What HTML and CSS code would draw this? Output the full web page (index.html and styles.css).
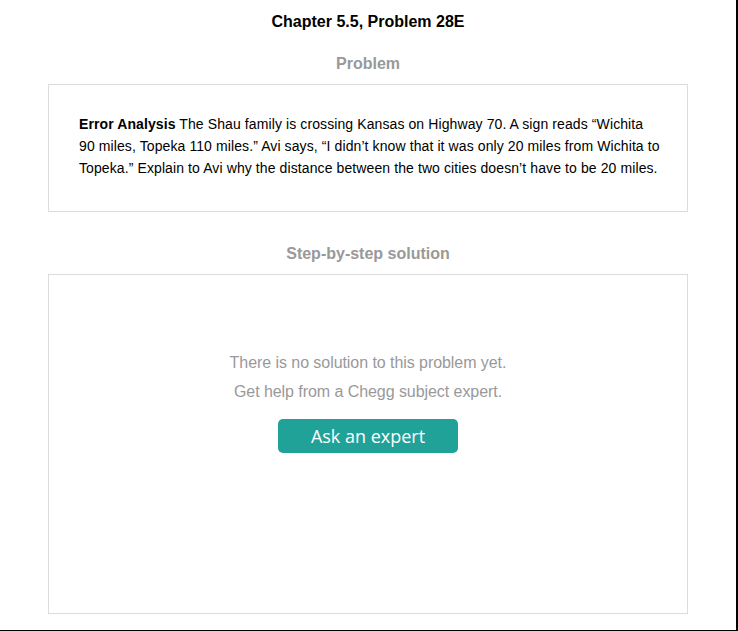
FILE: index.html
```html
<!DOCTYPE html>
<html>
<head>
<meta charset="utf-8">
<link rel="stylesheet" href="styles.css">
</head>
<body>
<div class="page">
  <h1 class="title">Chapter 5.5, Problem 28E</h1>
  <h2 class="section-head">Problem</h2>
  <div class="problem-box">
    <p class="problem-text"><b>Error Analysis</b> The Shau family is crossing Kansas on Highway 70. A sign reads “Wichita 90 miles, Topeka 110 miles.” Avi says, “I didn’t know that it was only 20 miles from Wichita to Topeka.” Explain to Avi why the distance between the two cities doesn’t have to be 20 miles.</p>
  </div>
  <h2 class="section-head section-head-2">Step-by-step solution</h2>
  <div class="solution-box">
    <p class="no-solution">There is no solution to this problem yet.<br>Get help from a Chegg subject expert.</p>
    <button class="ask-btn">Ask an expert</button>
  </div>
</div>
</body>
</html>
```
FILE: styles.css
```css
html, body {
  margin: 0;
  padding: 0;
  background: #fff;
}
.page {
  width: 738px;
  height: 631px;
  box-sizing: border-box;
  border-right: 2px solid #000;
  border-bottom: 1px solid #000;
  padding-top: 12px;
  font-family: "Liberation Sans", Arial, sans-serif;
  overflow: hidden;
}
.title {
  margin: 0;
  font-size: 16px;
  line-height: 20px;
  font-weight: bold;
  color: #000;
  text-align: center;
}
.section-head {
  margin: 22px 0 10px;
  font-size: 16px;
  line-height: 20px;
  font-weight: bold;
  color: #999;
  text-align: center;
}
.section-head-2 {
  margin-top: 32px;
}
.problem-box {
  width: 640px;
  box-sizing: border-box;
  margin: 0 auto;
  border: 1px solid #dcdcdc;
  padding: 28px 26px 32px 30px;
}
.problem-text {
  margin: 0;
  font-size: 14px;
  line-height: 22px;
  letter-spacing: 0.1px;
  color: #000;
}
.solution-box {
  width: 640px;
  height: 340px;
  box-sizing: border-box;
  margin: 0 auto;
  border: 1px solid #dcdcdc;
  padding-top: 73px;
  display: flex;
  flex-direction: column;
  align-items: center;
}
.no-solution {
  margin: 0;
  font-size: 16px;
  line-height: 29px;
  letter-spacing: -0.06px;
  color: #999;
  text-align: center;
}
.ask-btn {
  margin-top: 13px;
  width: 180px;
  height: 34px;
  border: none;
  border-radius: 5px;
  background: #21a299;
  color: #fff;
  font-family: "Open Sans", sans-serif;
  font-size: 18px;
  padding: 0;
  line-height: 34px;
}
```
